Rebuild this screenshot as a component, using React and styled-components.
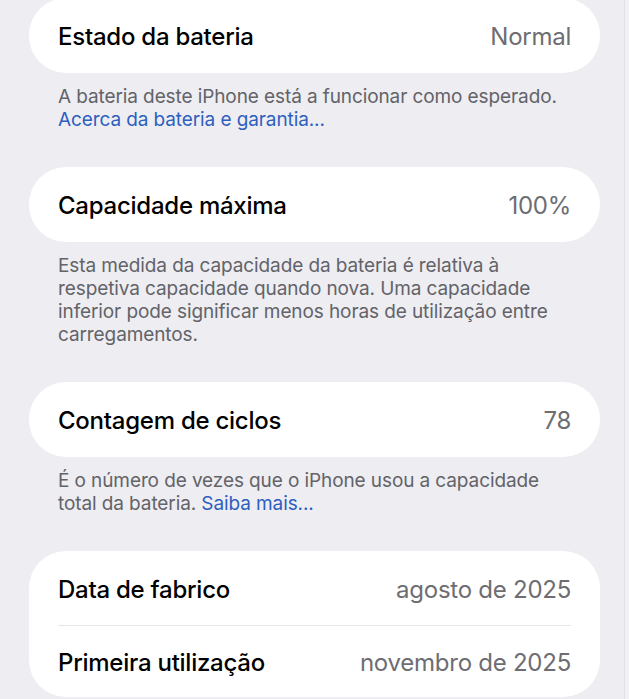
import React from 'react'
import styled, { createGlobalStyle } from 'styled-components'

const GlobalStyle = createGlobalStyle`
  html, body {
    margin: 0;
    padding: 0;
    background: #ededf2;
  }
  body {
    font-family: Inter, "Noto Sans", "Liberation Sans", sans-serif;
    -webkit-font-smoothing: antialiased;
  }
`

const Page = styled.div`
  width: 629px;
  height: 699px;
  overflow: hidden;
  box-sizing: border-box;
  padding: 0 29px;
  background: #ededf2;
  box-shadow: inset -4px 0 0 #f1f1f5, inset -5px 0 0 #e0e0e5;
`

const Scroll = styled.div`
  margin-top: -2px;
  display: flex;
  flex-direction: column;
`

const Card = styled.div`
  background: #ffffff;
  border-radius: 37px;
  padding: 0 29px;
  display: flex;
  flex-direction: column;
`

const Row = styled.div`
  height: ${(p) => p.h || 75}px;
  display: flex;
  align-items: center;
  justify-content: space-between;
  border-top: ${(p) => (p.divider ? '1.5px solid #e6e6ea' : 'none')};
  box-sizing: border-box;
  padding-top: 2px;
`

const Label = styled.span`
  font-size: 24px;
  font-weight: 500;
  color: #000000;
  letter-spacing: -0.25px;
`

const Value = styled.span`
  font-size: 24px;
  font-weight: 400;
  color: #6d6d72;
  letter-spacing: -0.25px;
`

const Footer = styled.p`
  margin: 0;
  padding: 12px 29px 36px;
  font-size: 19px;
  line-height: 23px;
  color: #636368;
  letter-spacing: -0.1px;
  white-space: nowrap;
`

const Link = styled.a`
  color: #2e5fbf;
  text-decoration: none;
`

export default function App() {
  return (
    <>
      <GlobalStyle />
      <Page>
        <Scroll>
          <Card>
            <Row>
              <Label>Estado da bateria</Label>
              <Value>Normal</Value>
            </Row>
          </Card>
          <Footer>
            A bateria deste iPhone está a funcionar como esperado.
            <br />
            <Link>Acerca da bateria e garantia...</Link>
          </Footer>

          <Card>
            <Row>
              <Label>Capacidade máxima</Label>
              <Value>100%</Value>
            </Row>
          </Card>
          <Footer>
            Esta medida da capacidade da bateria é relativa à
            <br />
            respetiva capacidade quando nova. Uma capacidade
            <br />
            inferior pode significar menos horas de utilização entre
            <br />
            carregamentos.
          </Footer>

          <Card>
            <Row>
              <Label>Contagem de ciclos</Label>
              <Value>78</Value>
            </Row>
          </Card>
          <Footer>
            É o número de vezes que o iPhone usou a capacidade
            <br />
            total da bateria. <Link>Saiba mais...</Link>
          </Footer>

          <Card>
            <Row h={74}>
              <Label>Data de fabrico</Label>
              <Value>agosto de 2025</Value>
            </Row>
            <Row h={72} divider>
              <Label>Primeira utilização</Label>
              <Value>novembro de 2025</Value>
            </Row>
          </Card>
        </Scroll>
      </Page>
    </>
  )
}
